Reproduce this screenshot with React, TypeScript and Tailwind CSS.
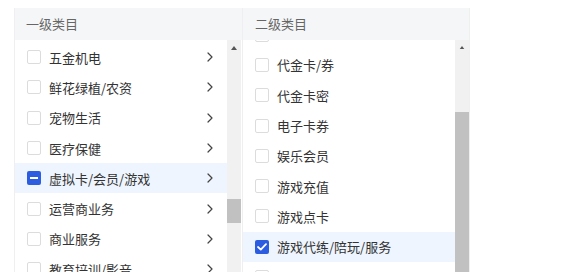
import React from 'react';

type Item = { name: string; state?: 'checked' | 'half' };

const LEVEL_ONE: Item[] = [
  { name: '五金机电' },
  { name: '鲜花绿植/农资' },
  { name: '宠物生活' },
  { name: '医疗保健' },
  { name: '虚拟卡/会员/游戏', state: 'half' },
  { name: '运营商业务' },
  { name: '商业服务' },
  { name: '教育培训/影音' },
];

// first row is scrolled mostly out of view, only its checkbox edge shows
const LEVEL_TWO: Item[] = [
  { name: '' },
  { name: '代金卡/券' },
  { name: '代金卡密' },
  { name: '电子卡券' },
  { name: '娱乐会员' },
  { name: '游戏充值' },
  { name: '游戏点卡' },
  { name: '游戏代练/陪玩/服务', state: 'checked' },
  { name: '游戏周边' },
];

function Box({ state }: { state?: 'checked' | 'half' }) {
  if (state === 'checked') {
    return (
      <span className="w-[14px] h-[14px] shrink-0 rounded-[2px] bg-[#2c5ce0] flex items-center justify-center">
        <svg width="10" height="8" viewBox="0 0 10 8" fill="none">
          <path d="M1 4l2.8 2.6L9 1.2" stroke="#fff" strokeWidth="1.8" strokeLinecap="round" strokeLinejoin="round" />
        </svg>
      </span>
    );
  }
  if (state === 'half') {
    return (
      <span className="w-[14px] h-[14px] shrink-0 rounded-[2px] bg-[#2c5ce0] flex items-center justify-center">
        <span className="w-[8px] h-[2px] bg-white" />
      </span>
    );
  }
  return <span className="w-[14px] h-[14px] shrink-0 rounded-[2px] border border-[#dcdcdc] bg-white" />;
}

function Scrollbar({ thumbTop, thumbHeight }: { thumbTop: number; thumbHeight: number }) {
  return (
    <div className="w-[14px] shrink-0 bg-[#f1f1f1] flex flex-col items-center">
      <svg width="6" height="4" viewBox="0 0 6 4" className="mt-[6px]">
        <path d="M3 0L6 4H0z" fill="#555" />
      </svg>
      <div className="w-full bg-[#c1c1c1]" style={{ marginTop: thumbTop - 10, height: thumbHeight }} />
    </div>
  );
}

export default function App() {
  return (
    <div
      className="w-[572px] h-[272px] overflow-hidden bg-white pt-2 pl-[14px] flex text-[13px] text-[#333]"
      style={{ fontFamily: '"Noto Sans CJK SC", "Noto Sans", sans-serif' }}
    >
      {/* 一级类目 */}
      <div className="w-[228px] border-l border-[#efefef] flex flex-col">
        <div className="h-[32px] shrink-0 bg-[#f5f6f7] pl-[11px] flex items-center text-[#666]">一级类目</div>
        <div className="flex-1 flex min-h-0">
          <div className="flex-1 pt-[2px] overflow-hidden">
            {LEVEL_ONE.map((it) => (
              <div
                key={it.name}
                className={`h-[30.3px] flex items-center pl-3 pr-[14px] gap-2 ${it.state ? 'bg-[#eef5fe]' : ''}`}
              >
                <Box state={it.state} />
                <span className="flex-1 leading-none">{it.name}</span>
                <svg width="6" height="10" viewBox="0 0 6 10" fill="none">
                  <path d="M1 1l4 4-4 4" stroke="#444" strokeWidth="1.2" strokeLinecap="round" strokeLinejoin="round" />
                </svg>
              </div>
            ))}
          </div>
          <Scrollbar thumbTop={159} thumbHeight={24} />
          <div className="w-[1px]" />
        </div>
      </div>

      {/* 二级类目 */}
      <div className="w-[228px] border-l border-r border-[#efefef] flex flex-col">
        <div className="h-[32px] shrink-0 bg-[#f5f6f7] pl-3 flex items-center text-[#666]">二级类目</div>
        <div className="flex-1 flex min-h-0">
          <div className="flex-1 overflow-hidden">
            <div className="-mt-[20.5px]">
              {LEVEL_TWO.map((it, i) => (
                <div
                  key={i}
                  className={`h-[30.3px] flex items-center pl-3 gap-2 ${it.state ? 'bg-[#eef5fe]' : ''}`}
                >
                  <Box state={it.state} />
                  <span className="leading-none">{it.name}</span>
                </div>
              ))}
            </div>
          </div>
          <Scrollbar thumbTop={73} thumbHeight={200} />
        </div>
      </div>
    </div>
  );
}
